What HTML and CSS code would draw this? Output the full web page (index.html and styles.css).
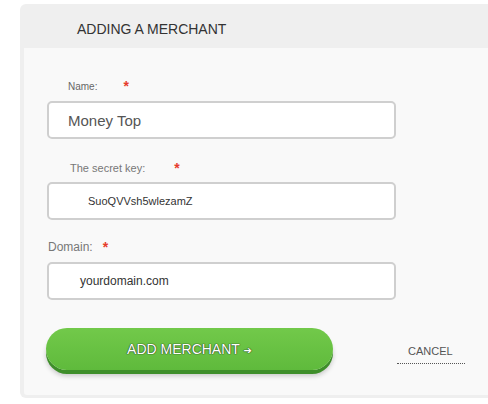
FILE: index.html
```html
<!DOCTYPE html>
<html>
<head>
<meta charset="utf-8">
<link rel="stylesheet" href="styles.css">
</head>
<body>
<div class="card">
  <div class="card-header">ADDING A MERCHANT</div>
  <div class="card-body">
    <div class="field">
      <label class="label label-name">Name:<span class="req req-name">*</span></label>
      <div class="input input-name">Money Top</div>
    </div>
    <div class="field">
      <label class="label label-key">The secret key:<span class="req req-key">*</span></label>
      <div class="input input-key">SuoQVVsh5wlezamZ</div>
    </div>
    <div class="field">
      <label class="label label-domain">Domain:<span class="req req-domain">*</span></label>
      <div class="input input-domain">yourdomain.com</div>
    </div>
    <div class="actions">
      <button class="btn-add">ADD MERCHANT <span class="arrow">&#10132;</span></button>
      <a class="cancel">CANCEL</a>
    </div>
  </div>
</div>
</body>
</html>
```

FILE: styles.css
```css
html, body {
  margin: 0;
  padding: 0;
  background: #ffffff;
}
body {
  padding: 4px 0 0 20px;
  font-family: "Liberation Sans", Arial, sans-serif;
  width: 488px;
  height: 404px;
  box-sizing: border-box;
  overflow: hidden;
}
.card {
  background: #efefef;
  border-radius: 6px 0 0 6px;
  padding: 0 0 3px 4px;
}
.card-header {
  height: 44px;
  box-sizing: border-box;
  padding: 17px 0 0 53px;
  font-size: 14px;
  line-height: 16px;
  color: #333;
}
.card-body {
  background: #f9f9f9;
  border-radius: 0 0 0 3px;
  padding: 32px 0 25px 23px;
}
.field {
  margin-bottom: 22px;
}
.field:nth-child(2) {
  margin-bottom: 20px;
}
.label {
  display: block;
  height: 14px;
  line-height: 14px;
  color: #777;
  margin-bottom: 7px;
}
.label-name {
  font-size: 10px;
  padding-left: 21px;
  color: #666;
}
.label-key {
  font-size: 11px;
  padding-left: 23px;
}
.label-domain {
  font-size: 12px;
  padding-left: 1px;
  margin-bottom: 8px;
}
.req {
  color: #e63c2c;
  font-size: 14px;
  font-weight: bold;
  line-height: 0;
  position: relative;
  top: 1px;
}
.req-name { margin-left: 26px; }
.req-key { margin-left: 29px; }
.req-domain { margin-left: 10px; }
.input {
  width: 349px;
  height: 38px;
  box-sizing: border-box;
  background: #fff;
  border: 2px solid #cfcfcf;
  border-radius: 5px;
  display: flex;
  align-items: center;
  color: #333;
}
.input-name {
  font-size: 15px;
  color: #555;
  padding-left: 19px;
}
.input-key {
  font-size: 11px;
  padding-left: 39px;
}
.input-domain {
  font-size: 12px;
  padding-left: 31px;
}
.actions {
  display: flex;
  align-items: center;
  margin-top: 28px;
}
.btn-add {
  width: 287px;
  height: 42px;
  margin-left: -1px;
  border: none;
  border-radius: 22px;
  background: linear-gradient(#72c94a, #5fba3c);
  box-shadow: 0 4px 0 #3e8e2a, 0 6px 5px rgba(0,0,0,0.2);
  color: #fff;
  font-family: "Liberation Sans", Arial, sans-serif;
  font-size: 14px;
  padding: 0;
  text-shadow: 0 0 1px #2f4f22, 0 0 1px #2f4f22, 0 0 1px #2f4f22;
}
.arrow {
  font-family: "DejaVu Sans", sans-serif;
  font-size: 10px;
}
.cancel {
  margin-left: 64px;
  margin-top: 10px;
  font-size: 11px;
  color: #555;
  padding: 0 12px 5px 11px;
  border-bottom: 1px dotted #555;
  line-height: 13px;
}
```
